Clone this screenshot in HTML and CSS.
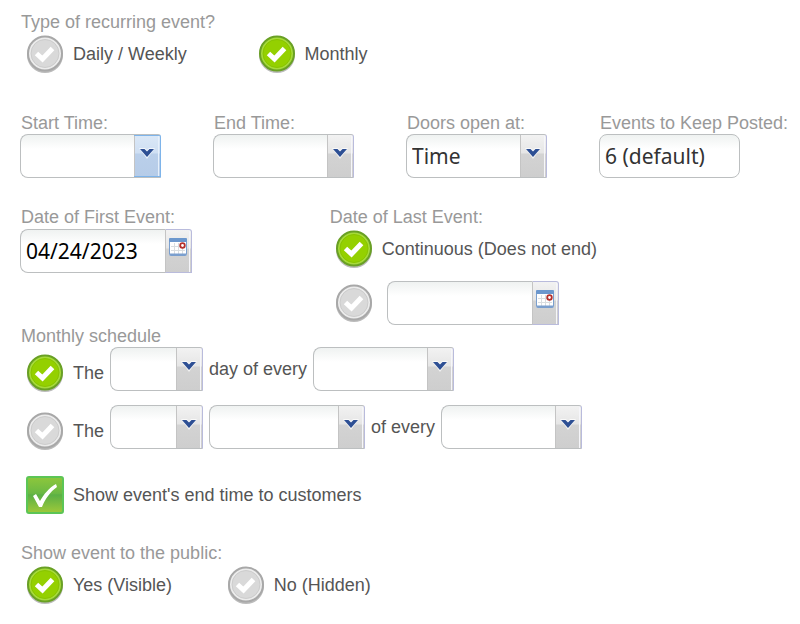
FILE: index.html
```html
<!DOCTYPE html>
<html lang="en">
<head>
  <meta charset="UTF-8" />
  <title>Recurring Event</title>
  <meta name="viewport" content="width=device-width, initial-scale=1.0" />
  <link rel="stylesheet" href="styles.css">
</head>
<body>
  <svg class="sprite" aria-hidden="true">
    <symbol id="calendar" viewBox="0 0 18 18">
      <rect x="0.5" y="1" width="17" height="16.5" rx="1" fill="#fff" stroke="#7b9fce" />
      <rect x="0" y="0" width="18" height="4" rx="1" fill="#6c97cd" />
      <path d="M2 8.5h14M2 12.5h14M5.5 5v11M9.5 5v11M13.5 5v11" stroke="#d9dde0" fill="none" />
      <path d="M1 16.5h16" stroke="#7b9fce" stroke-width="2" />
      <circle cx="13.5" cy="7.5" r="2.3" fill="#fff" stroke="#b5302c" stroke-width="1.8" />
    </symbol>
  </svg>

  <form class="event-form">
    <fieldset class="type">
      <legend>Type of recurring event?</legend>
      <div class="choices">
        <label class="choice"><input type="radio" name="type" /> Daily / Weekly</label>
        <label class="choice"><input type="radio" name="type" checked /> Monthly</label>
      </div>
    </fieldset>

    <div class="times">
      <div class="field">
        <label for="start_time">Start Time:</label>
        <select id="start_time" class="active"><option></option></select>
      </div>
      <div class="field">
        <label for="end_time">End Time:</label>
        <select id="end_time"><option></option></select>
      </div>
      <div class="field">
        <label for="doors_open">Doors open at:</label>
        <select id="doors_open"><option>Time</option></select>
      </div>
      <div class="field">
        <label for="keep_posted">Events to Keep Posted:</label>
        <input type="text" id="keep_posted" value="6 (default)" />
      </div>
    </div>

    <div class="dates">
      <div class="field">
        <label for="first_event">Date of First Event:</label>
        <div class="date">
          <input type="text" id="first_event" value="04/24/2023" />
          <button type="button" aria-label="Choose date"><svg><use href="#calendar" /></svg></button>
        </div>
      </div>
      <fieldset>
        <legend>Date of Last Event:</legend>
        <label class="choice"><input type="radio" name="last" checked /> Continuous (Does not end)</label>
        <div class="choice until">
          <input type="radio" name="last" aria-label="Ends on date" />
          <div class="date">
            <input type="text" aria-label="Last event date" />
            <button type="button" aria-label="Choose date"><svg><use href="#calendar" /></svg></button>
          </div>
        </div>
      </fieldset>
    </div>

    <fieldset class="schedule">
      <legend>Monthly schedule</legend>
      <div class="rule">
        <label class="choice"><input type="radio" name="rule" checked /> The</label>
        <select class="short" aria-label="Day"><option></option></select>
        <span>day of every</span>
        <select aria-label="Month interval"><option></option></select>
      </div>
      <div class="rule">
        <label class="choice"><input type="radio" name="rule" /> The</label>
        <select class="short" aria-label="Week"><option></option></select>
        <select class="long" aria-label="Weekday"><option></option></select>
        <span>of every</span>
        <select aria-label="Month interval"><option></option></select>
      </div>
    </fieldset>

    <label class="choice show-end"><input type="checkbox" checked /> Show event's end time to customers</label>

    <fieldset class="public">
      <legend>Show event to the public:</legend>
      <div class="choices">
        <label class="choice"><input type="radio" name="public" checked /> Yes (Visible)</label>
        <label class="choice"><input type="radio" name="public" /> No (Hidden)</label>
      </div>
    </fieldset>
  </form>
</body>
</html>
```
FILE: styles.css
```css
:root {
  --label-color: #999;
  --text-color: #555;
  --border-color: #bcbfc0;
  --trigger-border: #b9bbdc;
  --field-bg: linear-gradient(#eff2f1, #fff 14px);
  --trigger-bg: linear-gradient(#f2f2f2, #e6e6e6 42%, #d3d3d3 46%, #cecece);
  --arrow: url("data:image/svg+xml,%3Csvg xmlns='http://www.w3.org/2000/svg' viewBox='0 0 18 12'%3E%3Cpath d='M1 1h6l2 2 2-2h6L9 12z' fill='%23fff' opacity='.7'/%3E%3Cpath d='M2 2h4.500l2.500 2.500L11.500 2H16L9 10z' fill='%232d4f94'/%3E%3C/svg%3E");
}

* {
  box-sizing: border-box;
}

body {
  margin: 0;
  background-color: #fff;
  color: var(--text-color);
  font-family: "Liberation Sans", Arial, sans-serif;
  font-size: 18px;
  line-height: 20px;
}

.sprite {
  display: none;
}

.event-form {
  padding: 12px 8px 16px 20px;
}

fieldset {
  border: none;
  margin: 0;
  padding: 0;
  min-width: 0;
}

legend,
.field > label {
  display: block;
  padding: 0 0 0 1px;
  color: var(--label-color);
  white-space: nowrap;
}

.choices {
  display: grid;
  padding-top: 3px;
}

.type .choices {
  grid-template-columns: 30% 1fr;
}

.public .choices {
  grid-template-columns: 26% 1fr;
}

.choice {
  display: flex;
  align-items: center;
  gap: 9px;
  padding-left: 6px;
  white-space: nowrap;
}

input[type="radio"],
input[type="checkbox"] {
  appearance: none;
  flex: none;
  width: 38px;
  height: 38px;
  margin: 0;
}

input[type="radio"] {
  background: url("data:image/svg+xml,%3Csvg xmlns='http://www.w3.org/2000/svg' viewBox='0 0 38 38'%3E%3Ccircle cx='19' cy='20' r='18' fill='%23bbb'/%3E%3Ccircle cx='19' cy='18.500' r='17' fill='%23ececec' stroke='%23a8a8a8' stroke-width='2'/%3E%3Ccircle cx='19' cy='18.500' r='14' fill='%23d9d9d9' stroke='%23cccccc'/%3E%3Cpath d='M10.500 18.500l6 5.500L26.500 13.500' fill='none' stroke='%23fff' stroke-width='5'/%3E%3C/svg%3E");
}

input[type="radio"]:checked {
  background: url("data:image/svg+xml,%3Csvg xmlns='http://www.w3.org/2000/svg' viewBox='0 0 38 38'%3E%3Ccircle cx='19' cy='20' r='18' fill='%23bbb'/%3E%3Ccircle cx='19' cy='18.500' r='17' fill='%23a6da3a' stroke='%2369a024' stroke-width='2'/%3E%3Ccircle cx='19' cy='18.500' r='14' fill='%2394d000' stroke='%2388c400'/%3E%3Cpath d='M10.500 18.500l6 5.500L26.500 13.500' fill='none' stroke='%23fff' stroke-width='5'/%3E%3C/svg%3E");
}

input[type="checkbox"] {
  border: 2px solid #5cc556;
  border-radius: 3px;
  background: linear-gradient(#8cc63c, #6bb944 45%, #5bb045 50%, #9cc83a);
}

input[type="checkbox"]:checked {
  background: url("data:image/svg+xml,%3Csvg xmlns='http://www.w3.org/2000/svg' viewBox='0 0 34 34'%3E%3Cpath d='M5 18l3-2 4 7C16 16 21 10 28 6l1 3C22 14 17 21 14 29h-3z' fill='%23fff'/%3E%3C/svg%3E") center / 34px 34px no-repeat,
    linear-gradient(#8cc63c, #6bb944 45%, #5bb045 50%, #9cc83a);
}

select,
input[type="text"] {
  appearance: none;
  width: 141px;
  height: 44px;
  margin: 0;
  padding: 0 5px;
  border: 1px solid var(--border-color);
  border-radius: 8px;
  background: var(--field-bg);
  color: #333;
  font-family: "Noto Sans", Tahoma, sans-serif;
  font-size: 21px;
}

select {
  padding-right: 30px;
  border-right-color: var(--trigger-border);
  border-radius: 8px 3px 0 8px;
  background:
    var(--arrow) right 4px top 12px / 18px 12px no-repeat,
    linear-gradient(#f6f6fa, #f6f6fa) right 1px top / 1px 100% no-repeat,
    var(--trigger-bg) right top / 25px 100% no-repeat,
    linear-gradient(#c4c4c4, #c4c4c4) right 25px top / 1px 100% no-repeat,
    var(--field-bg);
}

select.active {
  --trigger-bg: linear-gradient(#dbe8f7, #cfdff3 42%, #bacfea 46%, #b6cce8);
  border-right-color: #7eb4ea;
  background:
    var(--arrow) right 4px top 12px / 18px 12px no-repeat,
    linear-gradient(#7eb4ea, #7eb4ea) right top / 26px 1px no-repeat,
    linear-gradient(#7eb4ea, #7eb4ea) right bottom / 26px 1px no-repeat,
    linear-gradient(#e6f0fb, #e6f0fb) right 1px top / 1px 100% no-repeat,
    var(--trigger-bg) right top / 25px 100% no-repeat,
    linear-gradient(#c4c4c4, #c4c4c4) right 25px top / 1px 100% no-repeat,
    var(--field-bg);
}

select.short {
  width: 93px;
}

select.long {
  width: 156px;
}

.times {
  display: grid;
  grid-template-columns: repeat(4, 1fr);
  margin-top: 40px;
}

.field > label {
  padding-bottom: 1px;
}

.field select,
.field input {
  display: block;
}

.dates {
  display: grid;
  grid-template-columns: 40% 1fr;
  margin-top: 29px;
}

.dates legend {
  padding-bottom: 3px;
}

.dates .field > label {
  padding-bottom: 2px;
}

.date {
  display: flex;
  width: 172px;
}

.date input[type="text"] {
  flex: 1;
  min-width: 0;
  border-right: none;
  border-radius: 8px 0 0 8px;
  color: #000;
}

.date button {
  display: flex;
  justify-content: center;
  flex: none;
  width: 27px;
  height: 44px;
  padding: 8px 1px 0 0;
  border: 1px solid var(--trigger-border);
  border-left-color: #c4c4c4;
  border-radius: 0 3px 0 0;
  background:
    linear-gradient(#f6f6fa, #f6f6fa) right 1px top / 1px 100% no-repeat,
    var(--trigger-bg);
  cursor: pointer;
}

.date svg {
  width: 18px;
  height: 18px;
}

.until {
  gap: 14px;
  margin-top: 13px;
}

.schedule {
  margin-top: 1px;
}

.rule {
  display: flex;
  align-items: center;
  gap: 6px;
  margin-bottom: 12px;
}

.rule .choice {
  padding-top: 8px;
}

.show-end {
  margin-top: 26px;
}

.schedule + .show-end {
  margin-top: 14px;
}

.public {
  margin-top: 29px;
}

@media (max-width: 700px) {
  .times {
    grid-template-columns: repeat(2, 1fr);
    row-gap: 16px;
  }

  .dates {
    grid-template-columns: 1fr;
    row-gap: 16px;
  }

  .rule {
    flex-wrap: wrap;
  }
}
```
